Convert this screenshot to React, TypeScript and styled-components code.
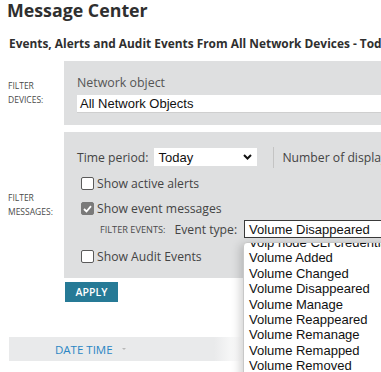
import React from 'react';
import styled, { createGlobalStyle, css } from 'styled-components';

const GlobalStyle = createGlobalStyle`
  html, body {
    margin: 0;
    padding: 0;
    background: #ffffff;
    overflow: hidden;
  }
  body {
    font-family: "Open Sans", "DejaVu Sans", sans-serif;
    color: #333333;
  }
`;

const Page = styled.div`
  position: relative;
  width: 381px;
  height: 372px;
  overflow: hidden;
`;

const Title = styled.h1`
  margin: 0;
  padding: 0 0 0 7px;
  font-size: 17.8px;
  line-height: 20px;
  font-weight: 700;
  color: #2f2f2f;
  white-space: nowrap;
`;

const SubTitle = styled.h2`
  margin: 0;
  padding: 15px 0 0 9px;
  font-size: 11.9px;
  line-height: 16px;
  font-weight: 700;
  color: #2f2f2f;
  white-space: nowrap;
`;

const FilterRow = styled.div<{ $top: number }>`
  display: grid;
  grid-template-columns: 64px 420px;
  margin-top: ${p => p.$top}px;
`;

const SideLabel = styled.div`
  align-self: center;
  padding-left: 8px;
  font-size: 8.5px;
  line-height: 14px;
  text-transform: uppercase;
  color: #4a4a4a;
`;

const Panel = styled.div<{ $height: number }>`
  background: #dedfe0;
  height: ${p => p.$height}px;
  box-sizing: border-box;
  padding-left: 13px;
  overflow: hidden;
`;

const FieldLabel = styled.div`
  padding-top: 14px;
  font-size: 12.4px;
  line-height: 16px;
  color: #555555;
`;

const TextBox = styled.div`
  margin-top: 4px;
  height: 17px;
  background: #ffffff;
  border-bottom: 1px solid #cfcfcf;
  font-family: "Liberation Sans", Arial, sans-serif;
  font-size: 13px;
  line-height: 17px;
  padding-left: 3px;
  color: #111111;
`;

const Line = styled.div<{ $top: number }>`
  display: flex;
  align-items: center;
  height: 18px;
  margin-top: ${p => p.$top}px;
  font-size: 12.2px;
  color: #444444;
  white-space: nowrap;
`;

const Select = styled.div<{ $width: number; $dark?: boolean }>`
  display: flex;
  align-items: center;
  justify-content: space-between;
  width: ${p => p.$width}px;
  height: 18px;
  box-sizing: border-box;
  background: #ffffff;
  padding: 0 5px 0 4px;
  font-family: "Liberation Sans", Arial, sans-serif;
  font-size: 13px;
  color: #111111;
  ${p => p.$dark && css`
    border: 1px solid #3a3a3a;
  `}
`;

const Divider = styled.span`
  width: 1px;
  height: 21px;
  background: #c4c4c4;
  margin: 0 8px 0 16px;
`;

const CheckLine = styled.label<{ $top: number }>`
  display: flex;
  align-items: center;
  height: 17px;
  margin-top: ${p => p.$top}px;
  margin-left: 4px;
  font-size: 12.2px;
  color: #444444;
  white-space: nowrap;
`;

const Box = styled.span<{ $checked?: boolean }>`
  display: inline-flex;
  align-items: center;
  justify-content: center;
  width: 13px;
  height: 13px;
  box-sizing: border-box;
  border-radius: 2px;
  margin-right: 3px;
  border: 1px solid #5a5a5a;
  background: #ffffff;
  ${p => p.$checked && css`
    border-color: #7a7a7a;
    background: #7a7a7a;
  `}
`;

const Indent = styled.span`
  width: 23px;
`;

const SmallCaps = styled.span`
  font-size: 9.2px;
  text-transform: uppercase;
  color: #4a4a4a;
  margin-right: 9px;
`;

const InlineLabel = styled.span<{ $gap?: number }>`
  margin-right: ${p => p.$gap ?? 6}px;
`;

const ApplyButton = styled.button`
  display: block;
  margin: 4px 0 0 65px;
  width: 53px;
  height: 20px;
  border: none;
  padding: 0;
  background: #267a96;
  color: #ffffff;
  font-family: "Open Sans", sans-serif;
  font-size: 10.5px;
  font-weight: 600;
`;

const HeaderBar = styled.div`
  display: flex;
  align-items: center;
  margin: 35px 0 0 9px;
  height: 24px;
  width: 372px;
  background: linear-gradient(to right, #e9eaeb 0, #e9eaeb 205px, #ffffff 234px);
`;

const HeaderCell = styled.span`
  margin-left: 46px;
  font-size: 11.5px;
  color: #2a86c4;
`;

const SortArrow = styled.span`
  margin-left: 9px;
  width: 0;
  height: 0;
  border-left: 2px solid transparent;
  border-right: 2px solid transparent;
  border-top: 2px solid #b8b8b8;
`;

const DropList = styled.ul`
  position: absolute;
  left: 243px;
  top: 242px;
  width: 150px;
  height: 140px;
  margin: 0;
  padding: 0 0 0 5px;
  list-style: none;
  background: #ffffff;
  border: 1px solid #c8c8c8;
  border-radius: 4px 0 0 0;
  box-shadow: -3px 2px 10px rgba(0, 0, 0, 0.18);
  overflow: hidden;
  font-family: "Liberation Sans", Arial, sans-serif;
  font-size: 13px;
  color: #111111;
`;

const DropItem = styled.li<{ $first?: boolean }>`
  height: 15.4px;
  line-height: 15.4px;
  white-space: nowrap;
  ${p => p.$first && css`
    margin-top: -8px;
  `}
`;

const items = [
  'Voip node CLI credentials',
  'Volume Added',
  'Volume Changed',
  'Volume Disappeared',
  'Volume Manage',
  'Volume Reappeared',
  'Volume Remanage',
  'Volume Remapped',
  'Volume Removed',
];

function Chevron() {
  return (
    <svg width="9" height="6" viewBox="0 0 9 6">
      <path d="M1 1 L4.5 4.5 L8 1" fill="none" stroke="#111" strokeWidth="2" />
    </svg>
  );
}

function Check() {
  return (
    <svg width="9" height="8" viewBox="0 0 9 8">
      <path d="M1 4 L3.5 6.5 L8 1.2" fill="none" stroke="#fff" strokeWidth="1.8" />
    </svg>
  );
}

function App() {
  return (
    <Page>
      <GlobalStyle />
      <Title>Message Center</Title>
      <SubTitle>Events, Alerts and Audit Events From All Network Devices - Today</SubTitle>

      <FilterRow $top={10}>
        <SideLabel>Filter<br />devices:</SideLabel>
        <Panel $height={64}>
          <FieldLabel>Network object</FieldLabel>
          <TextBox>All Network Objects</TextBox>
        </Panel>
      </FilterRow>

      <FilterRow $top={7}>
        <SideLabel>Filter<br />messages:</SideLabel>
        <Panel $height={146}>
          <Line $top={16}>
            <InlineLabel>Time period:</InlineLabel>
            <Select $width={103}>Today<Chevron /></Select>
            <Divider />
            <span>Number of displayed messages</span>
          </Line>
          <CheckLine $top={9}><Box />Show active alerts</CheckLine>
          <CheckLine $top={8}><Box $checked><Check /></Box>Show event messages</CheckLine>
          <Line $top={3}>
            <Indent />
            <SmallCaps>Filter events:</SmallCaps>
            <InlineLabel $gap={7}>Event type:</InlineLabel>
            <Select $width={160} $dark>Volume Disappeared</Select>
          </Line>
          <CheckLine $top={10}><Box />Show Audit Events</CheckLine>
        </Panel>
      </FilterRow>

      <ApplyButton>APPLY</ApplyButton>

      <HeaderBar>
        <HeaderCell>DATE TIME</HeaderCell>
        <SortArrow />
      </HeaderBar>

      <DropList>
        {items.map((t, i) => (
          <DropItem key={t} $first={i === 0}>{t}</DropItem>
        ))}
      </DropList>
    </Page>
  );
}

export default App;
